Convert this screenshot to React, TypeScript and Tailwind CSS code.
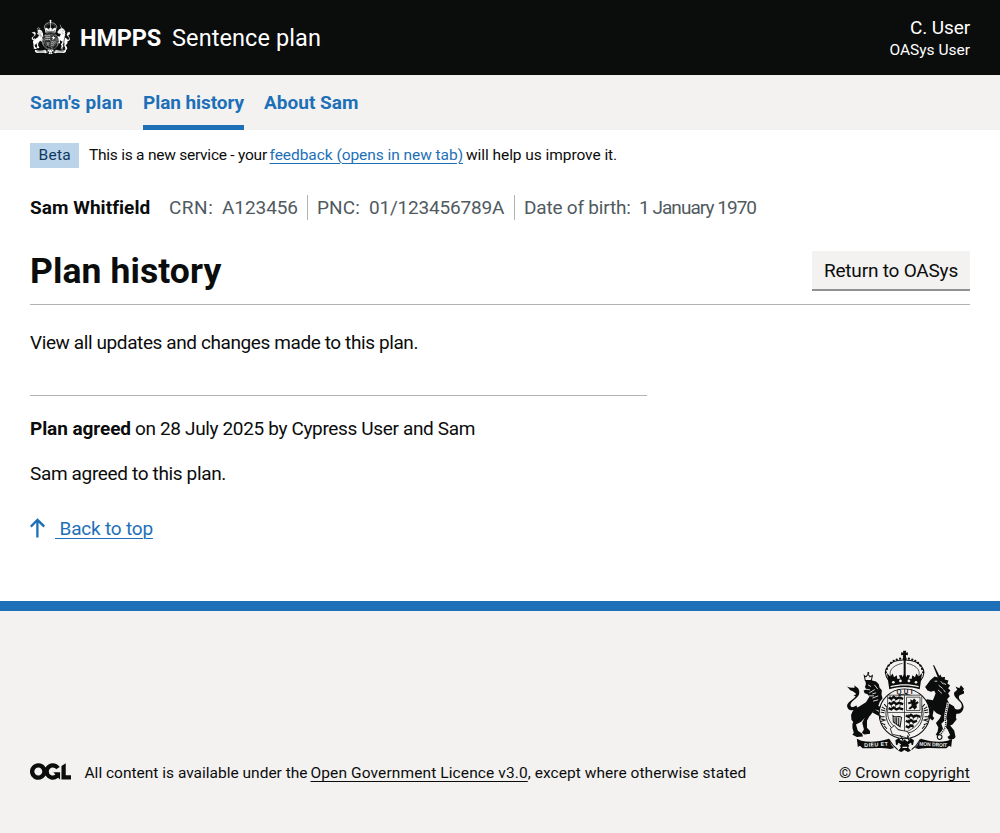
import React from "react";

const beads = [
  [141, 82], [144, 72], [149, 62], [156, 54], [164, 48], [173, 44], [183, 41],
  [209, 41], [219, 44], [228, 48], [236, 54], [243, 62], [248, 72], [251, 82],
];

function Crest({ className, shield, motto = false }: { className: string; shield: string; motto?: boolean }) {
  return (
    <svg className={className} viewBox="20 15 352 310" preserveAspectRatio="none" aria-hidden="true" fill="currentColor" stroke="none">
      {/* crown */}
      <path d="M192 17h9l-1 6 6-1v9l-6-1 1 7h-10l1-7-6 1v-9l6 1z" />
      <circle cx="196.500" cy="41" r="6" />
      <g fill="none" stroke="currentColor">
        <path d="M150 108C124 76 152 44 193 45M243 108c26-32-2-64-47-63" strokeWidth="3" />
        <path d="M196.500 45v60" strokeWidth="6" />
        <path d="M158 100c-12-20 0-38 32-45M235 100c12-20 0-38-32-45" strokeWidth="2" />
      </g>
      {beads.map(([x, y]) => (
        <circle key={`${x}-${y}`} cx={x} cy={y} r="3.4" />
      ))}
      <path d="M144 84l10 11 7-9 4 11 8-6 2 11 9-1-5-9 9-2 2 7 6-13 6 13 2-7 9 2-5 9 9 1 2-11 8 6 4-11 7 9 10-11-7 49c-32-9-59-9-90 0z" />
      <g fill={shield}>
        <circle cx="163" cy="112" r="4" />
        <circle cx="184" cy="108" r="4" />
        <circle cx="209" cy="108" r="4" />
        <circle cx="230" cy="112" r="4" />
        <path d="M155 123c28-7 55-7 83 0v4c-28-7-55-7-83 0z" />
      </g>

      {/* lion */}
      <path d="M77 92l5 4 6-8 6 8 7-4-3 15H80z" fill={shield} stroke="currentColor" strokeWidth="3" />
      <circle cx="89" cy="84" r="3" />
      <path d="M80 108l18-2 14 4 8 8 2 10 7 8-1 13 3 12-8 10-6 16-13 12-10 14-14 5-12 13-17 9-12-15-1-15 8-16 16-9 20-13 10-16-5-8-9-3-3-8 8-3-4-8 3-9z" />
      <path d="M104 176l18 9 14-2 8-9 8 3 5 8-6 8-24 6-20-6-10-8z" />
      <path d="M108 193l12 8 18-4 8 5-3 10-10-2-14 3-18-10z" />
      <path d="M57 191c-13 9-26 7-30-4-6-17 30-24 25-41l-8-6-19-15 17 5 7-3-2-6 12 9c7 14 3 24-11 34-9 7-14 14-11 20 4 5 10 2 17-2z" />
      <path d="M30 131l12-3 8 8-12 2zM45 152l13-6-3 9z" />
      <path d="M42 200l24 17-14 21 6 20 13 9 2 8-18 2-13-7 4-6-4-14 0-13 8-15-9-11z" />
      <path d="M80 205l15 4-10 19 0 21 9 10 0 8-17 2-7-5 6-10-5-20 7-14z" />

      {/* unicorn */}
      <path d="M280 60l4 2 17 34-6 3z" />
      <path d="M272 106l13-11 11 3 6-9 4 8 10-1-1 8 11 3-3 9 8 6-6 8 7 7-7 8 5 9-8 9 6 13 14 8 8 18-2 15-13 13-14-3-9-12-21-10-14-14-15-8-14 1-8 7-11-1-5-10 10-7 15 1 14-11 17 3 8-20-4-8-10 3-10-4-7-11 7-9z" />
      <path d="M253 180l14 4 16 9-4 20 5 8-6 6-11-11 2-21-16-6z" />
      <path d="M344 206l6 18-12 15-7 3 12 15 4 20-5 6-14 1-5-7 8-6-7-16-9-12 8-15-2-15z" />
      <path d="M308 205l12 5-6 18-9 9 5 16-3 14-7 7-12-3 6-11 2-12-7-13 10-12z" />
      <path d="M341 190c12 6 21 6 24-4 4-17-27-25-22-43l9-8-5-10 11 5 5-9 9 11-4 7 7-3-3 10-13 5c-5 7 0 13 5 19 6 8 9 16 5 25-6 15-19 15-31 6z" />
      <g fill="none" stroke={shield} strokeWidth="2.500">
        <path d="M88 120l9 5m-15 8 12 2m-2 9 16-10m-1-14 10 13m-16 14 11-3m-22 9 16 0m-5 7 17-7m-15 16 15-4" />
        <path d="M285 109h8m10 0 8 9m-14 3 12 10m-14 4 12 11m4-31 8 4m-8 15 6 8" />
      </g>
      <path d="M325 172c-4 30-12 38-8 56 4 19-7 33-17 43" fill="none" stroke={shield} strokeWidth="7" />
      <path d="M325 172c-4 30-12 38-8 56 4 19-7 33-17 43" fill="none" stroke="currentColor" strokeWidth="4" strokeDasharray="3 3" />
      <circle cx="300" cy="277" r="7" fill={shield} stroke="currentColor" strokeWidth="3" />

      {/* garter and quartered shield */}
      <ellipse cx="196" cy="207" rx="75" ry="75" fill={shield} stroke="currentColor" strokeWidth="3" />
      <ellipse cx="196" cy="207" rx="55" ry="59" fill={shield} stroke="currentColor" strokeWidth="2.500" />
      <path d="M146 151h101v51c0 32-22 50-50 61-29-11-51-29-51-61z" fill={shield} stroke="currentColor" strokeWidth="2" />
      <path d="M146 203h101M196 151v109" stroke="currentColor" strokeWidth="2" />
      <g fill="none" stroke="currentColor">
        <path d="M149 158l8 4 7-6 8 6 8-4 12 4M149 174l8 4 7-6 8 6 8-4 12 4M149 190l8 4 7-6 8 6 8-4 12 4" strokeWidth="7" />
        <path d="M200 212l8 4 7-6 8 6 8-4 12 4M200 228l8 4 7-6 8 6 10-4M200 244l8 4 7-6 8 4" strokeWidth="7" />
        <path d="M154 154l5 16m13-15-5 16m18-16-4 15m-27 3 5 16m13-15-5 16m18-16-4 15M207 208l5 16m14-15-5 16m17-15-5 14m-26 0 5 17m13-14-5 14" strokeWidth="2" />
        <path d="M202 157h40v40h-40z" strokeWidth="2" />
        <path d="M162 213c6 8 16-2 25 5l-4 28-20-14zM168 218v18m5-18v22m6-22v24" strokeWidth="3" />
      </g>
      <path d="M213 163l7 4 4-6 6 5-2 7 7-4 3 5-7 6 2 7-8 8-4-7-9 6-4-4 9-7-1-7-8 2-2-5 8-2z" />
      <g fill="none" stroke="currentColor" strokeWidth="3">
        <path d="M144 252l-8-9m3-3-12-5m-1-5 12-4-13-4m0-6h12m-13-5v10m1-19 12 2m-11-9 12 3m-9-12 10 7m-3-15 7 8" />
        <path d="M248 252l8-9m-3-3 12-5m1-5-12-4 13-4m0-6h-12m13-5v10m-1-19-12 2m11-9-12 3m9-12-10 7m3-15-7 8" />
      </g>
      {motto && (
        <text x="172" y="148" className="font-['Liberation_Sans'] text-[19px] font-bold" textLength="48">
          QUI
        </text>
      )}
      <path d="M154 252l12-10 11 13 27 5 7 11-7 9-20-6-24-5z" fill={shield} stroke="currentColor" strokeWidth="2.500" />
      <path d="M183 272l8 10-5 12M205 272l3 14" fill="none" stroke="currentColor" strokeWidth="3" />

      {/* scroll and compartment */}
      <path d="M55 282l13 6c28 7 55 2 82-6l8 20 7 8-11 3c-27-6-54-2-82-2l-8-8-6 4z" />
      <path d="M337 282l-13 6c-28 7-53 2-80-6l-10 20-7 8 11 3c27-6 54-2 82-2l8-8 6 4z" />
      <path d="M150 284l13 19 13 12M243 284l-13 19-13 12" fill="none" stroke="currentColor" strokeWidth="3" />
      <path d="M169 287l10-7 9 11 8-7 9 7 9-11 10 7-3 15-9-5-5 12 8 9-9 4-10-6-9 6-10-4 8-9-5-12-9 5z" />
      <path d="M177 296l8 5m23 0 8-5M190 308h14" fill="none" stroke={shield} strokeWidth="4" />
      {motto ? (
        <g fill={shield} className="font-['Liberation_Sans'] text-[16px] font-bold">
          <text x="77" y="305" textLength="70" transform="rotate(-3 110 300)">DIEU ET</text>
          <text x="240" y="305" textLength="82" lengthAdjust="spacingAndGlyphs" transform="rotate(3 280 300)">MON DROIT</text>
        </g>
      ) : (
        <path d="M78 299l68-5M242 294l78 5" fill="none" stroke={shield} strokeWidth="7" strokeDasharray="4 5" />
      )}
    </svg>
  );
}

function OglLogo() {
  return (
    <svg className="mb-[3px] h-[17px] w-[41px] shrink-0" viewBox="0 0 483.2 195.7" fill="currentColor" aria-hidden="true">
      <path d="M421.5 142.8V.1l-50.7 32.3v161.1h112.4v-50.7zm-122.3-9.6A47.12 47.12 0 0 1 221 97.8c0-26 21.1-47.1 47.1-47.1 16.7 0 31.4 8.7 39.7 21.8l42.7-27.2A97.63 97.63 0 0 0 268.1 0c-36.5 0-68.3 20.1-85.1 49.7A98 98 0 0 0 97.8 0C43.9 0 0 43.9 0 97.8s43.9 97.8 97.8 97.8c36.5 0 68.3-20.1 85.1-49.7a97.76 97.76 0 0 0 149.6 25.4l19.4 22.2h3v-87.8h-80l24.3 27.5zM97.8 145c-26 0-47.1-21.1-47.1-47.1s21.1-47.1 47.1-47.1 47.1 21.1 47.1 47.1S123.800 145 97.800 145" />
    </svg>
  );
}

function Header() {
  return (
    <header className="flex h-[75px] items-center justify-between bg-[#0b0c0c] px-[30px] text-white">
      <div className="flex items-center pt-px text-[23.5px] leading-[30px]">
        <Crest className="mr-[10px] ml-px h-[35px] w-[39px] -translate-y-[1.5px]" shield="#0b0c0c" />
        <span className="mr-[11px] font-bold tracking-[-0.18px]">HMPPS</span>
        <span className="tracking-[0.09px]">Sentence plan</span>
      </div>
      <div className="flex flex-col items-end">
        <span className="text-[19px] leading-[25px] tracking-[-0.1px]">C. User</span>
        <span className="text-[15.5px] leading-[20px]">OASys User</span>
      </div>
    </header>
  );
}

function Nav() {
  return (
    <nav className="flex h-[55px] gap-5 bg-[#f3f2f1] px-[30px] text-[19px] leading-[25px] font-bold text-[#1d70b8]">
      <a className="w-[93px] pt-[15px] tracking-[0.2px] whitespace-nowrap">Sam's plan</a>
      <a className="w-[101px] border-b-[5px] border-[#1d70b8] pt-[15px] tracking-[-0.07px] whitespace-nowrap">Plan history</a>
      <a className="w-[95px] pt-[15px] tracking-[0.02px] whitespace-nowrap">About Sam</a>
    </nav>
  );
}

function PersonDetails() {
  return (
    <div className="mt-[27px] flex h-[25px] text-[19px] leading-[25px] whitespace-nowrap text-[#505a5f]">
      <span className="w-[139px] font-bold tracking-[0.05px] text-[#0b0c0c]">Sam Whitfield</span>
      <div className="flex w-[139px] border-r border-[#b1b4b6]">
        <span className="w-[53px] tracking-[0.5px]">CRN:</span>
        <span className="tracking-[-0.07px]">A123456</span>
      </div>
      <div className="flex w-[207px] border-r border-[#b1b4b6] pl-[9px]">
        <span className="w-[52px] tracking-[0.12px]">PNC:</span>
        <span className="tracking-[-0.2px]">01/123456789A</span>
      </div>
      <div className="flex pl-[9px]">
        <span className="w-[115px] tracking-[-0.2px]">Date of birth:</span>
        <span className="tracking-[-0.96px]">1 January 1970</span>
      </div>
    </div>
  );
}

export default function App() {
  return (
    <div className="flex min-h-[833px] flex-col bg-white font-[Roboto,'Liberation_Sans',sans-serif] text-[#0b0c0c]">
      <Header />
      <Nav />
      <main className="h-[471px] px-[30px] pt-[13px]">
        <div className="flex h-[25px] text-[15.5px] leading-[24px] whitespace-nowrap">
          <strong className="mr-[10px] w-[49px] bg-[#bbd4ea] pl-[8.5px] font-normal tracking-[0.25px] text-[#0f385c]">Beta</strong>
          <span className="w-[180.500px] tracking-[-0.24px]">This is a new service - your</span>
          <a className="tracking-[-0.05px] text-[#1d70b8] underline decoration-1 underline-offset-[3px]">feedback (opens in new tab)</a>
          <span className="ml-[3px] tracking-[-0.06px]">will help us improve it.</span>
        </div>
        <PersonDetails />
        <div className="mt-[30px] flex h-[55px] justify-between border-b border-[#b1b4b6]">
          <h1 className="pt-px text-[35.5px] leading-[40px] font-bold tracking-[0.09px]">Plan history</h1>
          <button className="mt-px h-[40px] w-[158px] border-b-2 border-[#929191] bg-[#f3f2f1] pt-px text-[19px] leading-[37px] tracking-[-0.2px] whitespace-nowrap">
            Return to OASys
          </button>
        </div>
        <p className="mt-[25px] text-[19px] leading-[25px] tracking-[-0.4px]">View all updates and changes made to this plan.</p>
        <hr className="mt-[40px] w-[617px] border-t border-[#b1b4b6]" />
        <p className="mt-5 flex text-[19px] leading-[25px] whitespace-nowrap">
          <strong className="w-[105px] tracking-[-0.08px]">Plan agreed</strong>
          <span className="tracking-[-0.35px]">on 28 July 2025 by Cypress User and Sam</span>
        </p>
        <p className="mt-5 text-[19px] leading-[25px] tracking-[-0.35px]">Sam agreed to this plan.</p>
        <a className="mt-[30px] flex items-center text-[19px] leading-[25px] text-[#1d70b8]">
          <svg className="mr-[10px] mb-[2px] h-[20px] w-[15px]" viewBox="0 0 13 17" fill="currentColor" aria-hidden="true">
            <path d="M6.500 0L0 6.500 1.400 8l4-4v12.700h2V4l4.300 4L13 6.400z" />
          </svg>
          <span className="tracking-[-0.2px] whitespace-pre underline decoration-1 underline-offset-[3px]">{" Back to top"}</span>
        </a>
      </main>
      <footer className="flex flex-1 items-end justify-between border-t-[10px] border-[#1d70b8] bg-[#f3f2f1] px-[30px] pb-[50px] text-[15.5px] leading-[20px] whitespace-nowrap">
        <div className="flex items-center">
          <OglLogo />
          <span className="ml-[13.500px] w-[226px]">All content is available under the</span>
          <a className="tracking-[0.11px] underline decoration-1 underline-offset-[3px]">Open Government Licence v3.0</a>
          <span className="tracking-[0.04px]">, except where otherwise stated</span>
        </div>
        <a className="flex w-[131px] flex-col items-center">
          <Crest className="mb-[10px] h-[103px] w-[119px]" shield="#f3f2f1" motto />
          <span className="tracking-[0.16px] underline decoration-1 underline-offset-[3px]">© Crown copyright</span>
        </a>
      </footer>
    </div>
  );
}
